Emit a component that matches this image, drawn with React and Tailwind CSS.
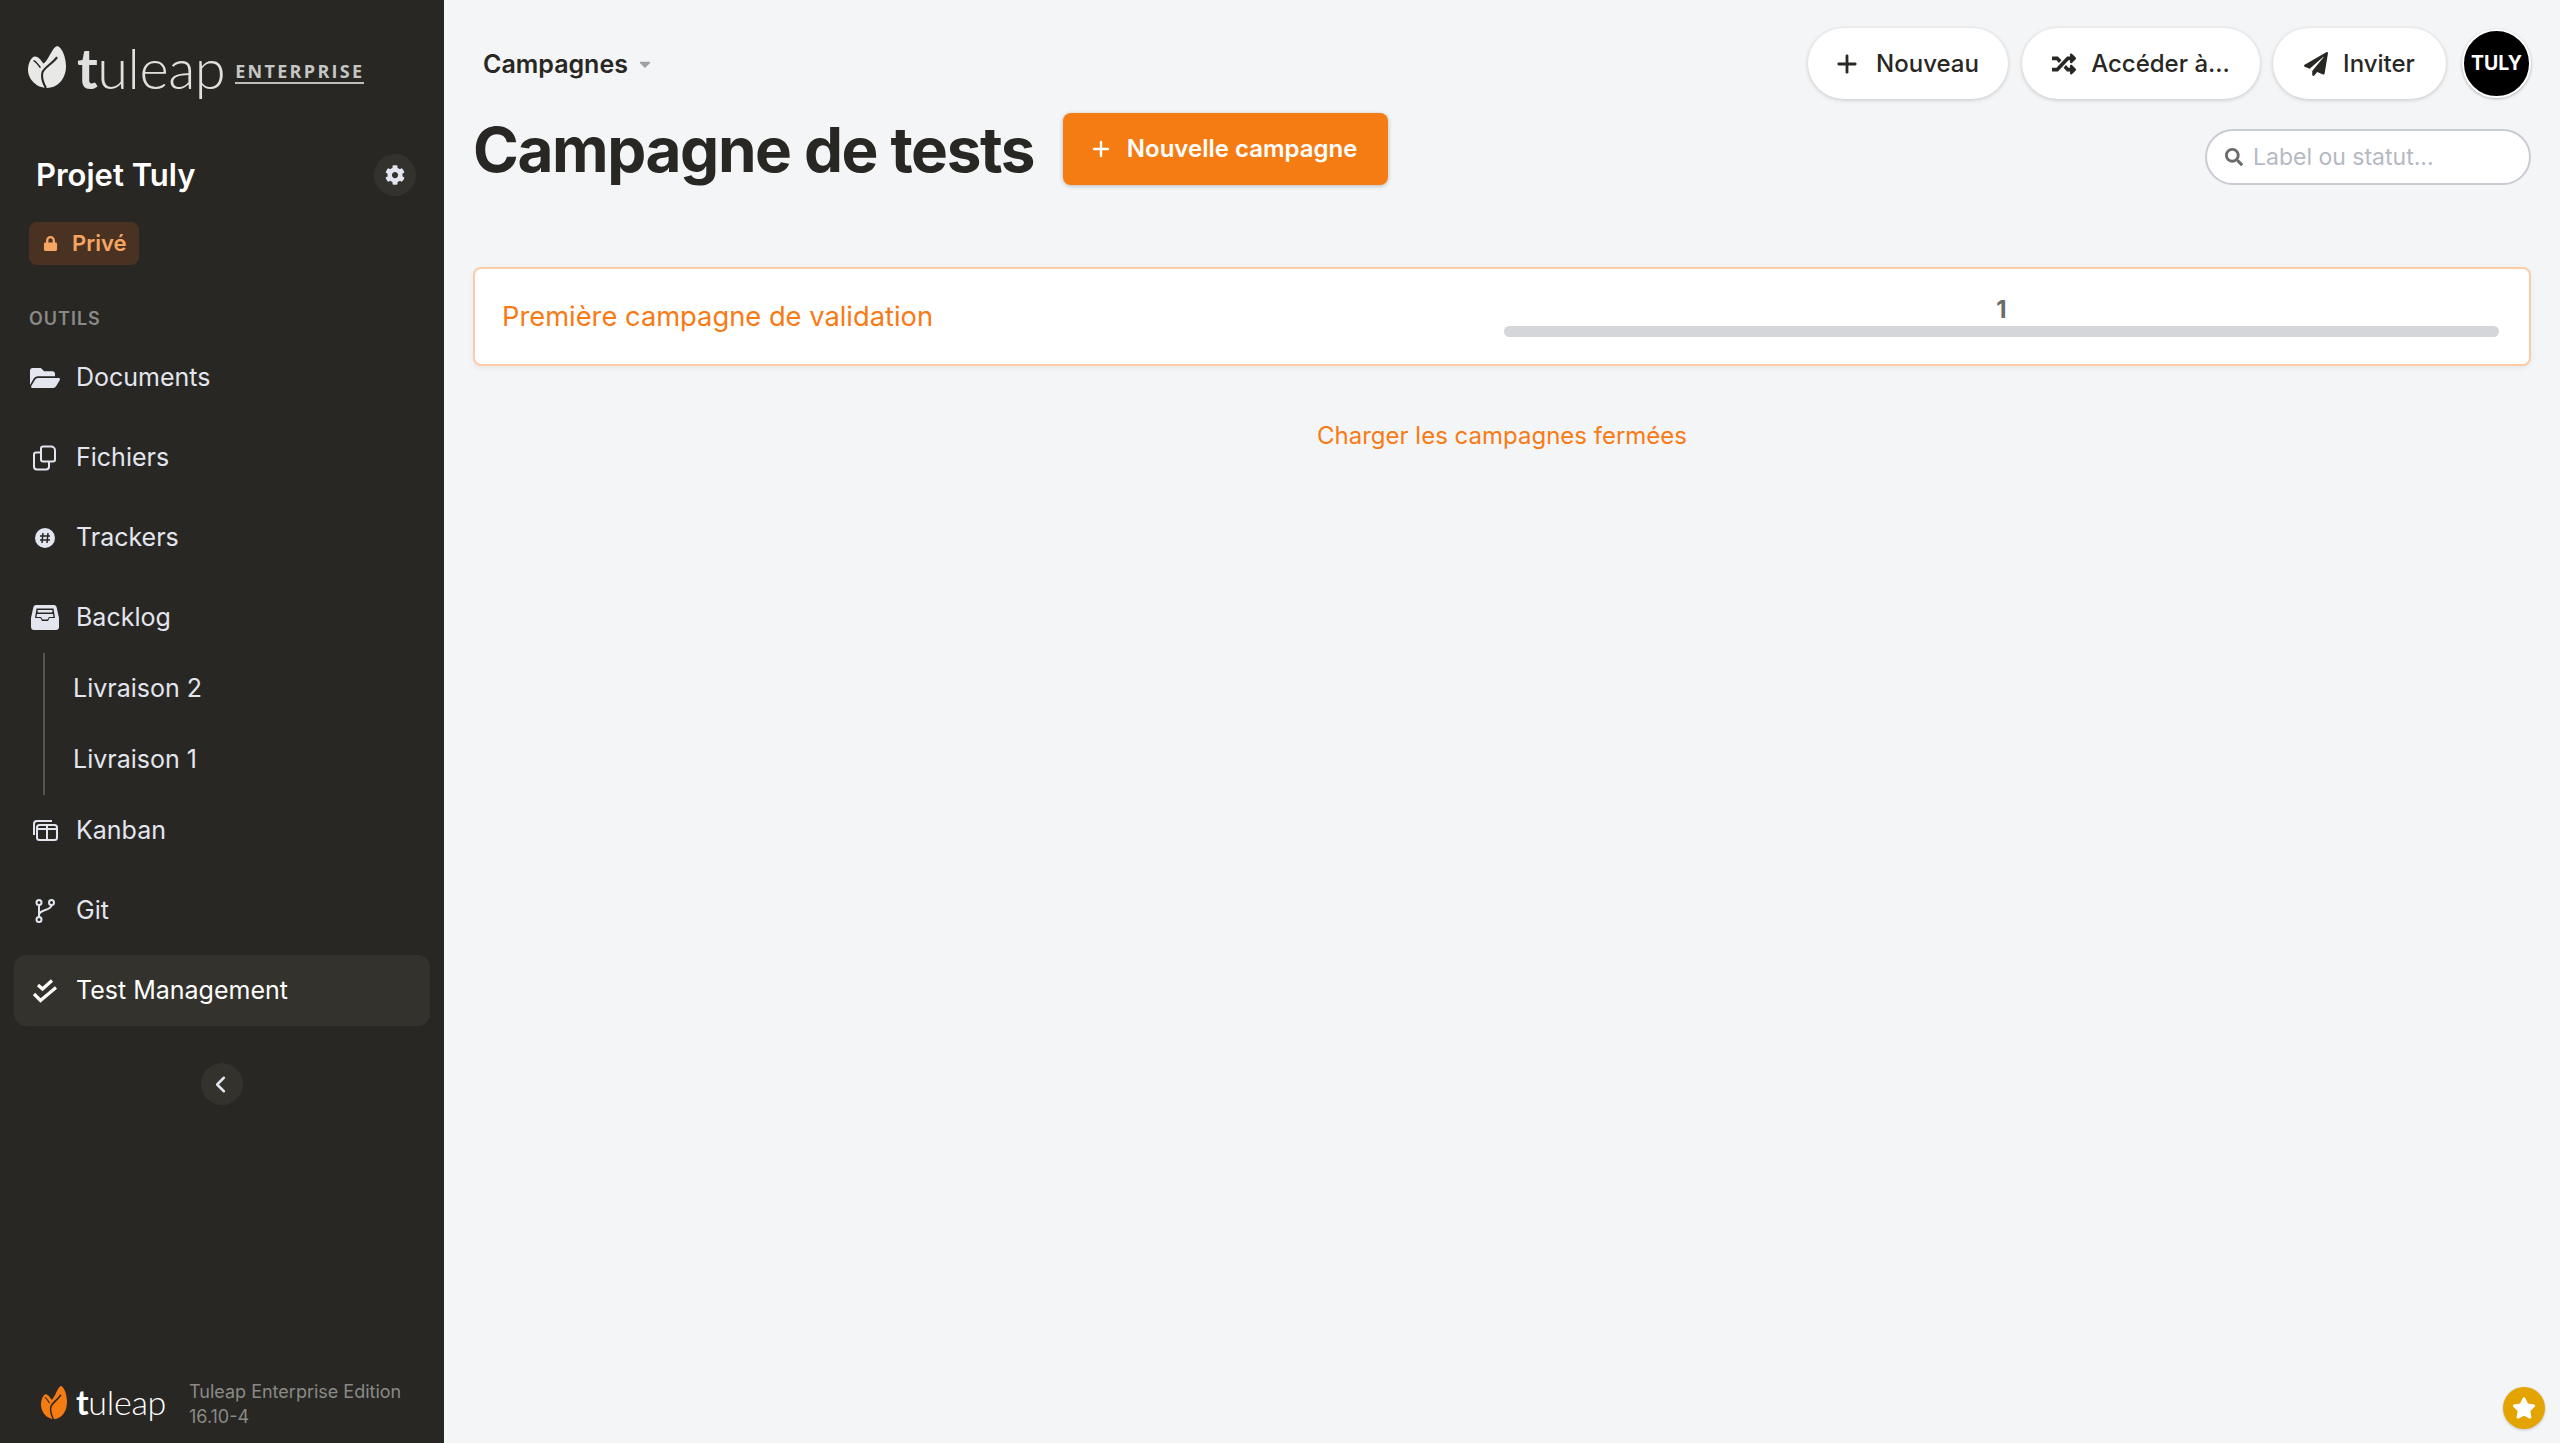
import React from "react";
import { FaFolderOpen, FaLock, FaCog, FaRandom, FaPaperPlane, FaSearch, FaStar, FaCaretDown } from "react-icons/fa";
import { Plus, ChevronLeft } from "lucide-react";

const Leaf = ({ fill, className }) => (
  <svg viewBox="0 0 110 120" className={className} preserveAspectRatio="none">
    <path fill={fill} d="M20 30C10 30 0 50 0 68c0 27 25 52 55 52s55-25 55-62C110 35 100 5 85 0 75 2 70 15 62 28 55 40 48 50 45 50 40 45 32 30 20 30z" />
    <path fill="none" stroke="#282723" strokeWidth="6" d="M84 32C72 50 48 60 42 75c-4 15 3 33 10 45" />
    <path fill="none" stroke="#282723" strokeWidth="4" d="M16 42c6 0 12 10 20 20" />
  </svg>
);

const FilesIcon = () => (
  <svg viewBox="0 0 24 26" className="h-[27px] w-[24px]" fill="none" stroke="currentColor" strokeWidth="2">
    <path d="M10 2h8a4 4 0 0 1 4 4v9a2 2 0 0 1-2 2H10a2 2 0 0 1-2-2V4a2 2 0 0 1 2-2z" />
    <path d="M8 8H3a2 2 0 0 0-2 2v12a3 3 0 0 0 3 3h9a3 3 0 0 0 3-3v-5" />
  </svg>
);
const TrackerIcon = () => (
  <svg viewBox="0 0 20 20" className="h-[20px] w-[20px]">
    <circle cx="10" cy="10" r="10" fill="currentColor" />
    <path d="M8 5L7 15M13 5l-1 10M5 8h10M5 12h10" stroke="#282723" strokeWidth="1.5" />
  </svg>
);
const BacklogIcon = () => (
  <svg viewBox="0 0 28 25" className="h-[25px] w-[28px]" fill="currentColor">
    <path fillRule="evenodd" d="M5 0h18c1.500 0 2.300 1 2.700 2.500L28 13v9c0 1.700-1.300 3-3 3H3c-1.700 0-3-1.300-3-3v-9L2.300 2.500C2.700 1 3.500 0 5 0zm.5 3.500h17L24 13h-5.500l-1.500 3h-6l-1.500-3H4z" />
    <rect x="6.500" y="5" width="15" height="2.500" rx="1" />
    <path d="M6 9h16l.5 3H18l-1.500 2.500h-5L10 12H5.500z" />
  </svg>
);
const KanbanIcon = () => (
  <svg viewBox="0 0 25 21" className="h-[21px] w-[25px]" fill="none" stroke="currentColor" strokeWidth="2">
    <path d="M1 15V4a3 3 0 0 1 3-3h15" />
    <rect x="4" y="5" width="20" height="15" rx="2.500" />
    <path d="M14 5v15M4 9h20" />
  </svg>
);
const GitIcon = () => (
  <svg viewBox="0 0 20 24" className="h-[24px] w-[20px]" fill="none" stroke="currentColor" strokeWidth="2">
    <circle cx="4" cy="3.500" r="2.500" />
    <circle cx="4" cy="20.500" r="2.500" />
    <circle cx="16.500" cy="3.500" r="2.500" />
    <path d="M4 6v12M16.500 6c0 6-12.500 4-12.500 10" />
  </svg>
);
const ChecksIcon = () => (
  <svg viewBox="0 0 24 24" className="h-[24px] w-[24px]" fill="none" stroke="currentColor" strokeWidth="3.200">
    <path d="M5 6l4.500 4L19 1.500M1 15l6.500 6.500L23 8.500" />
  </svg>
);

const NavItem = ({ icon, children, active }) => (
  <div className={`mx-[14px] flex h-[71px] shrink-0 items-center rounded-xl pl-[13px] text-[25px] ${active ? "bg-[#33322d] text-white" : "text-[#e3e5ef]"}`}>
    <span className="flex w-[36px] items-center justify-center">{icon}</span>
    <span className="ml-[13px] pt-[1px]">{children}</span>
  </div>
);

const Pill = ({ icon, children, className }) => (
  <button className={`flex h-[71px] items-center justify-center gap-[15px] rounded-full bg-white text-[24px] font-medium text-[#282723] shadow-[0_1px_4px_rgba(0,0,0,0.2)] ${className}`}>
    {icon}
    {children}
  </button>
);

export default function App() {
  return (
    <div className="flex h-[1443px] w-[2560px] overflow-hidden bg-[#f4f5f7] font-['Inter',sans-serif] text-[#282723]">
      <aside className="flex w-[444px] shrink-0 flex-col bg-[#282723]">
        <div className="flex h-[146px] items-start pl-[28px] pt-[36px]">
          <Leaf fill="#e8e8e6" className="mt-[10px] h-[42px] w-[38px]" />
          <span className="ml-[11px] font-['Lato',sans-serif] text-[56px] font-light leading-[64px] tracking-[-0.5px] text-[#e0e0de]">
            <span className="font-bold">t</span>uleap
          </span>
          <span className="ml-[10px] mt-[24px] border-b-2 border-[#bdbdbb] font-['Open_Sans',sans-serif] text-[18px] font-bold leading-[22px] tracking-[2.3px] text-[#c6c6c4]">ENTERPRISE</span>
        </div>
        <div className="flex h-[50px] items-center justify-between pl-[36px] pr-[28px] pt-[8px]">
          <span className="text-[31px] font-semibold text-white">Projet Tuly</span>
          <span className="flex h-[42px] w-[42px] items-center justify-center rounded-full bg-[#33322d] text-[#e3e5ef]">
            <FaCog size={20} />
          </span>
        </div>
        <div className="ml-[29px] mt-[26px] flex h-[43px] w-[110px] items-center gap-[14px] rounded-lg bg-[#4a3222] pl-[14px] text-[22px] font-semibold text-[#f6a662]">
          <FaLock size={15} />
          Privé
        </div>
        <div className="ml-[29px] mt-[43px] text-[18px] font-semibold leading-[22px] tracking-[1px] text-[#8a8a87]">OUTILS</div>
        <nav className="mt-[12px] flex flex-col">
          <div className="flex flex-col gap-[9px]">
            <NavItem icon={<FaFolderOpen size={30} />}>Documents</NavItem>
            <NavItem icon={<FilesIcon />}>Fichiers</NavItem>
            <NavItem icon={<TrackerIcon />}>Trackers</NavItem>
            <NavItem icon={<BacklogIcon />}>Backlog</NavItem>
          </div>
          <div className="ml-[43px] flex flex-col border-l-2 border-[#55544f] pl-[28px] text-[25px] text-[#e3e5ef]">
            <div className="flex h-[71px] items-center pt-[1px]">Livraison 2</div>
            <div className="flex h-[71px] items-center pt-[1px]">Livraison 1</div>
          </div>
          <div className="flex flex-col gap-[9px]">
            <NavItem icon={<KanbanIcon />}>Kanban</NavItem>
            <NavItem icon={<GitIcon />}>Git</NavItem>
            <NavItem active icon={<ChecksIcon />}>Test Management</NavItem>
          </div>
        </nav>
        <div className="mt-[37px] flex justify-center">
          <span className="flex h-[42px] w-[42px] items-center justify-center rounded-full bg-[#33322d] text-[#e3e5ef]">
            <ChevronLeft size={27} strokeWidth={2.2} className="-ml-[3px]" />
          </span>
        </div>
        <div className="mt-auto flex items-center pb-[14px] pl-[41px]">
          <Leaf fill="#f57c12" className="-mt-[4px] h-[33px] w-[26px]" />
          <span className="-mt-[4px] ml-[9px] font-['Lato',sans-serif] text-[34px] font-light leading-[44px] tracking-[-0.3px] text-white">
            <span className="font-bold">t</span>uleap
          </span>
          <div className="ml-[23px] text-[18px] leading-[25px] text-[#8a8a87]">
            <div>Tuleap Enterprise Edition</div>
            <div>16.10-4</div>
          </div>
        </div>
      </aside>
      <main className="relative flex min-w-0 flex-1 flex-col pl-[29px] pr-[29px]">
        <header className="flex h-[113px] items-start justify-between">
          <div className="mt-[46px] flex items-center gap-[8px] pl-[10px] text-[25px] font-semibold leading-[36px]">
            Campagnes
            <FaCaretDown size={18} className="text-[#a0a09e]" />
          </div>
          <div className="mt-[28px] flex items-center">
            <Pill className="w-[200px] pr-[4px]" icon={<Plus size={28} strokeWidth={2.4} />}>Nouveau</Pill>
            <Pill className="ml-[14px] w-[238px]" icon={<FaRandom size={24} />}>Accéder à...</Pill>
            <Pill className="ml-[13px] w-[173px]" icon={<FaPaperPlane size={24} />}>Inviter</Pill>
            <span className="ml-[16px] flex h-[69px] w-[69px] items-center justify-center rounded-full border-2 border-white bg-black text-[19.500px] font-bold text-white shadow-[0_1px_3px_rgba(0,0,0,0.3)]">TULY</span>
          </div>
        </header>
        <div className="flex h-[72px] items-center justify-between">
          <div className="flex items-center gap-[29px]">
            <h1 className="pt-[2px] text-[62px] font-bold leading-[72px] tracking-[-1.4px] text-[#282723]">Campagne de tests</h1>
            <button className="flex h-[72px] w-[325px] items-center justify-center gap-[14px] rounded-lg bg-[#f57c12] pr-[5px] text-[24px] font-semibold text-white shadow-[0_1px_4px_rgba(0,0,0,0.25)]">
              <Plus size={24} strokeWidth={2.4} />
              Nouvelle campagne
            </button>
          </div>
          <div className="mt-[16px] flex h-[56px] w-[326px] items-center gap-[10px] rounded-full border-2 border-[#c8ccd2] bg-white pl-[18px] text-[23px] text-[#b5b9c2]">
            <FaSearch size={18} className="text-[#6b6b6b]" />
            Label ou statut...
          </div>
        </div>
        <section className="mt-[82px] flex h-[99px] items-center justify-between rounded-lg border-2 border-[#fdcba6] bg-white pl-[27px] pr-[30px] shadow-[0_2px_6px_rgba(0,0,0,0.06)]">
          <span className="text-[27.300px] leading-[36px] text-[#f97a14]">Première campagne de validation</span>
          <div className="flex w-[995px] flex-col items-center pb-[3px]">
            <span className="text-[24px] font-bold leading-[32px] text-[#6b6b6b]">1</span>
            <div className="h-[11px] w-full rounded-full bg-[#d4d6da]" />
          </div>
        </section>
        <div className="mt-[52px] text-center text-[24px] leading-[36px] text-[#f97a14]">Charger les campagnes fermées</div>
        <span className="absolute bottom-[14px] right-[15px] flex h-[42px] w-[42px] items-center justify-center rounded-full bg-[#e4a400] text-white shadow-[0_1px_3px_rgba(0,0,0,0.2)]">
          <FaStar size={24} />
        </span>
      </main>
    </div>
  );
}
